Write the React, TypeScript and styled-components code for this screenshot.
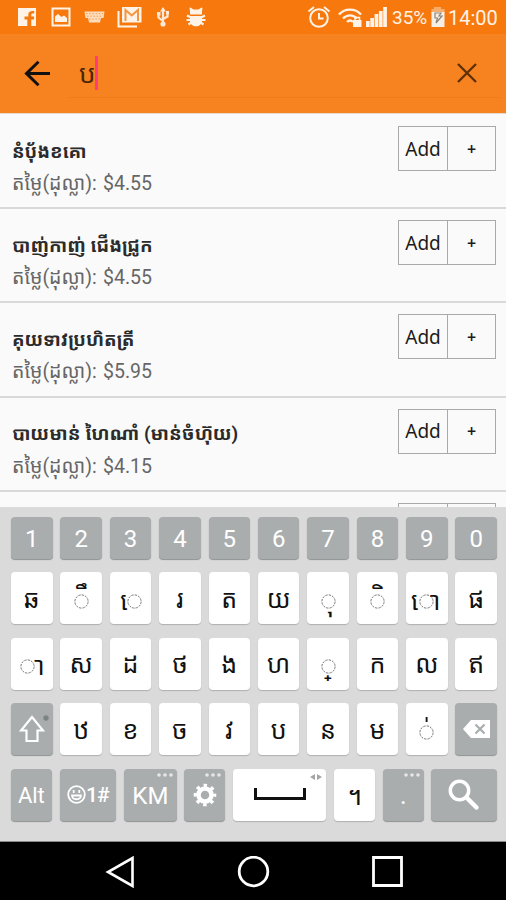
import React from "react";
import styled, { createGlobalStyle } from "styled-components";

const GlobalStyle = createGlobalStyle`
  *, *::before, *::after { box-sizing: border-box; }
  html, body { margin: 0; padding: 0; }
  body {
    background: #000;
    font-family: Roboto, "Noto Sans Khmer", "Khmer OS", "Noto Sans", sans-serif;
    overflow: hidden;
  }
  svg { display: block; flex: none; }
`;

const Screen = styled.div`
  width: 506px;
  height: 900px;
  display: flex;
  flex-direction: column;
  overflow: hidden;
  background: #fafafa;
`;

const StatusBar = styled.header`
  height: 34px;
  flex: none;
  display: flex;
  align-items: center;
  justify-content: space-between;
  padding: 0 9px 0 17px;
  background: #f7790d;
  color: #fff3e8;
`;

const StatusGroup = styled.div`
  display: flex;
  align-items: center;
`;

const StatusIcon = styled.span<{ $gap?: number }>`
  display: block;
  margin-left: ${(p) => p.$gap ?? 0}px;
`;

const StatusText = styled.span<{ $size: number; $gap: number; $width: number }>`
  font-size: ${(p) => p.$size}px;
  width: ${(p) => p.$width}px;
  margin-left: ${(p) => p.$gap}px;
  line-height: 34px;
  padding-top: 2px;
  white-space: nowrap;
`;

const AppBar = styled.div`
  height: 79px;
  flex: none;
  display: flex;
  align-items: flex-start;
  padding-left: 24px;
  background: #f78320;
`;

const BackButton = styled.button`
  border: 0;
  padding: 0;
  margin: 26px 0 0;
  width: 27px;
  background: none;
`;

const SearchField = styled.div`
  margin-left: 17px;
  width: 432px;
  height: 64px;
  display: flex;
  align-items: flex-start;
  border-bottom: 1px solid #ee7d1d;
  padding-left: 11px;
`;

const Query = styled.span`
  font-size: 26px;
  line-height: 30px;
  margin-top: 25px;
  color: #4a2606;
  width: 16px;
  white-space: nowrap;
`;

const Caret = styled.span`
  width: 2.500px;
  height: 34px;
  margin-top: 22px;
  background: #ff3d7d;
`;

const ClearButton = styled.button`
  border: 0;
  padding: 0;
  background: none;
  margin: 29px 0 0 359.500px;
`;

const List = styled.main`
  height: 394px;
  flex: none;
  overflow: hidden;
  border-top: 1px solid #e6d9cd;
  padding-top: 1px;
`;

const Item = styled.section`
  height: 94.200px;
  border-bottom: 2px solid #d9d9d9;
  display: flex;
  justify-content: space-between;
  padding: 0 10px 0 12px;
`;

const ItemText = styled.div`
  padding-top: 22.500px;
`;

const Title = styled.h2<{ $scale: number }>`
  margin: 0;
  font-size: 18px;
  font-weight: 700;
  line-height: 28px;
  color: #2b2b2b;
  white-space: nowrap;
  transform: scaleX(${(p) => p.$scale});
  transform-origin: left;
`;

const Price = styled.p`
  margin: 5.600px 0 0;
  display: flex;
  font-size: 19.500px;
  line-height: 26px;
  color: #666;
  white-space: nowrap;
`;

const PriceLabel = styled.span`
  width: 91px;
`;

const ButtonPair = styled.div`
  margin-top: 11px;
  width: 98px;
  height: 45px;
  display: grid;
  grid-template-columns: 48px 1fr;
  border: 1px solid #a9a9a9;
`;

const PairButton = styled.button`
  border: 0;
  padding: 0;
  background: none;
  font-family: "Noto Sans", sans-serif;
  font-size: 19px;
  color: #1b1b1b;
  & + & {
    border-left: 1px solid #a9a9a9;
    font-size: 16px;
    font-weight: 600;
  }
`;

const Keyboard = styled.section`
  height: 335px;
  flex: none;
  background: #dadada;
  border-bottom: 1px solid #8a8a8a;
  padding: 10px 9px 0 11px;
`;

const KeyRow = styled.div<{ $height: number; $gap: number; $columns?: string }>`
  display: grid;
  grid-template-columns: ${(p) => p.$columns ?? "repeat(10, 1fr)"};
  column-gap: 7.800px;
  height: ${(p) => p.$height}px;
  margin-bottom: ${(p) => p.$gap}px;
`;

const Key = styled.button<{ $dark?: boolean; $size?: number; $drop?: number }>`
  position: relative;
  min-width: 0;
  border: 0;
  border-radius: 4px;
  display: flex;
  align-items: center;
  justify-content: center;
  padding: ${(p) => p.$drop ?? 0}px 0 0;
  font-family: inherit;
  font-size: ${(p) => p.$size ?? 25}px;
  line-height: 30px;
  white-space: nowrap;
  background: ${(p) => (p.$dark ? "#a9adae" : "#fff")};
  color: ${(p) => (p.$dark ? "#fff" : "#111")};
  box-shadow: 0 1px 1px ${(p) => (p.$dark ? "#8e9293" : "#b0b0b0")};
`;

const Vowel = styled.span<{ $x: number; $y: number; $spread: number }>`
  font-family: "Noto Sans Khmer", "Khmer OS", sans-serif;
  word-spacing: ${(p) => p.$spread}px;
  transform: translate(${(p) => p.$x}px, ${(p) => p.$y}px);
`;

const BaseRing = styled.span<{ $x: number }>`
  position: absolute;
  left: calc(50% - 7.500px + ${(p) => p.$x}px);
  top: 21.500px;
`;

const SymbolLabel = styled.span`
  font-size: 21px;
  font-weight: 500;
  letter-spacing: -1px;
`;

const CornerMark = styled.span<{ $top: number; $right: number }>`
  position: absolute;
  top: ${(p) => p.$top}px;
  right: ${(p) => p.$right}px;
`;

const NavBar = styled.nav`
  height: 58px;
  flex: none;
  display: flex;
  background: #000;
  padding: 14px 0 0 105px;
`;

const NavButton = styled.button<{ $gap?: number }>`
  border: 0;
  padding: 0;
  background: none;
  height: 32px;
  margin-left: ${(p) => p.$gap ?? 0}px;
`;

const items = [
  { title: "នំប៉័ងខគោ", price: "$4.55", scale: 1.035 },
  { title: "បាញ់កាញ់ ជើងជ្រូក", price: "$4.55", scale: 1.037 },
  { title: "គុយទាវប្រហិតត្រី", price: "$5.95", scale: 1.035 },
  { title: "បាយមាន់ ហៃណាំ (មាន់ចំហ៊ុយ)", price: "$4.15", scale: 1.048 },
  { title: "", price: "", scale: 1 },
];

interface KeySpec {
  text: string;
  /* Dependent vowels sit around a dashed placeholder ring. */
  ring?: number;
  x?: number;
  y?: number;
  spread?: number;
}

const NB = "\u00a0";
const digits = ["1", "2", "3", "4", "5", "6", "7", "8", "9", "0"];
const upperKeys: KeySpec[] = [
  { text: "ឆ" },
  { text: NB + "ឹ", ring: 0, x: 4, y: -3 },
  { text: NB + "េ", ring: 4, x: -3.5 },
  { text: "រ" },
  { text: "ត" },
  { text: "យ" },
  { text: NB + "ុ", ring: 0, x: 6, y: 1 },
  { text: NB + "ិ", ring: 0, x: 4, y: -3 },
  { text: NB + "េ" + NB + "ា", ring: 0, spread: 2 },
  { text: "ផ" },
];
const homeKeys: KeySpec[] = [
  { text: NB + "ា", ring: -4, x: 6 },
  { text: "ស" },
  { text: "ដ" },
  { text: "ថ" },
  { text: "ង" },
  { text: "ហ" },
  { text: NB + "្", ring: 0, x: 4 },
  { text: "ក" },
  { text: "ល" },
  { text: "ឥ" },
];
const lowerKeys: KeySpec[] = [
  { text: "ឋ" },
  { text: "ខ" },
  { text: "ច" },
  { text: "វ" },
  { text: "ប" },
  { text: "ន" },
  { text: "ម" },
  { text: NB + "់", ring: 0, x: 4, y: -1.5 },
];

const LetterKey = ({ spec }: { spec: KeySpec }) => (
  <Key $drop={3}>
    {spec.ring === undefined ? (
      spec.text
    ) : (
      <>
        <BaseRing $x={spec.ring}>
          <svg width="15" height="15" fill="none" stroke="#777" strokeWidth="1">
            <circle cx="7.500" cy="7.500" r="6.600" strokeDasharray="2.400 1.056" />
          </svg>
        </BaseRing>
        <Vowel $x={spec.x ?? 0} $y={spec.y ?? 0} $spread={spec.spread ?? 0}>
          {spec.text}
        </Vowel>
      </>
    )}
  </Key>
);

const Dots = () => (
  <svg width="16" height="4" fill="#e6e8e8">
    <circle cx="2" cy="2" r="1.800" />
    <circle cx="8" cy="2" r="1.800" />
    <circle cx="14" cy="2" r="1.800" />
  </svg>
);

export default function App() {
  return (
    <>
      <GlobalStyle />
      <Screen>
        <StatusBar>
          <StatusGroup>
            <StatusIcon>
              <svg width="20" height="20" viewBox="0 0 20 20">
                <path fill="#fff3e8" d="M1 1h18v18h-4.700v-6.600h2.500l.4-2.900h-2.900V7.800c0-.9.3-1.300 1.400-1.300h1.500V4c-3.900-.5-5.900.7-5.900 3.400v2.100H7.500v2.900h2.800V19H1z" />
              </svg>
            </StatusIcon>
            <StatusIcon $gap={14}>
              <svg width="20" height="20" viewBox="0 0 20 20">
                <path fill="none" stroke="#fff3e8" strokeWidth="2" d="M1.500 1.500h17v17h-17z" />
                <path fill="#fff3e8" d="M4 15V9.500L7 7l3.500 3L13 8.500l3 2.500v4z" />
              </svg>
            </StatusIcon>
            <StatusIcon $gap={13}>
              <svg width="21" height="12" viewBox="0 0 21 12">
                <path fill="#ffdcbd" d="M.5.500h20L19.500 7H17l-1 4.500H5L4 7H1.500z" />
                <path stroke="#f59a4a" strokeWidth="1" strokeDasharray="1.500 1.700" d="M2 2.600h17M3 5.200h15M5 8h11" />
              </svg>
            </StatusIcon>
            <StatusIcon $gap={12}>
              <svg width="25" height="22" viewBox="0 0 25 22">
                <path fill="none" stroke="#fff3e8" strokeWidth="2" d="M1.500 5v15.500H20" />
                <path fill="#fff3e8" d="M5 1h19.500v15.500H5z" />
                <path fill="none" stroke="#f4953f" strokeWidth="2" d="M8.500 15V4l6.200 5.500L21 4v11" />
              </svg>
            </StatusIcon>
            <StatusIcon $gap={14}>
              <svg width="14" height="20" viewBox="0 0 14 20" fill="none" stroke="#ffe9d6" strokeWidth="2.200">
                <path d="M7 3v14M2.500 7v3.500L7 14M11.500 6v3.500L7 12" />
                <path fill="#ffe9d6" stroke="none" d="M7 0l3 4.500H4zM1 5h3.500v3.500H1zM10 4h3v3.500h-3z" />
                <circle cx="7" cy="17" r="1.500" fill="#ffe9d6" />
              </svg>
            </StatusIcon>
            <StatusIcon $gap={16}>
              <svg width="20" height="20" viewBox="0 0 20 20">
                <path fill="#fff3e8" d="M4 7.500V4.500L3.500 1l1-.5L7.500 2.500h5l3-2 1 .5-.5 3.500v3zM4 9h12v4.800c0 3.500-2.800 5.500-6 5.500s-6-2-6-5.500z" />
                <path stroke="#fff3e8" strokeWidth="2.200" d="M1 8.500L5 10.500M19 8.500L15 10.500M.5 13h19M2.500 17.500l3.500-2.300M17.500 17.500L14 15.200" />
              </svg>
            </StatusIcon>
          </StatusGroup>
          <StatusGroup>
            <StatusIcon>
              <svg width="24" height="24" viewBox="0 0 24 24" fill="none" stroke="#fff3e8" strokeWidth="2">
                <circle cx="12" cy="13" r="8.800" />
                <path d="M12 8v5.500h4.500M1.500 6.500L7 2M22.500 6.500L17 2" />
              </svg>
            </StatusIcon>
            <StatusIcon $gap={7}>
              <svg width="24" height="22" viewBox="0 0 24 22" fill="none" stroke="#fff3e8" strokeWidth="2.400">
                <path d="M1 8.500C7 2 17 2 23 8.500M5 12.500c4-4.200 10-4.200 14 0M9 16c2-2 4-2 6 0" />
                <path fill="#fff3e8" stroke="none" d="M15 14h8.500v7H15z" />
                <path strokeWidth="1.500" d="M17 14v-2.500h4.500V14" />
              </svg>
            </StatusIcon>
            <StatusIcon $gap={4}>
              <svg width="21" height="20" viewBox="0 0 21 20" fill="#fff3e8">
                <path d="M0 14h3.700v6H0zM4.300 11H8v9H4.300zM8.600 7h3.700v13H8.600zM12.900 4h3.700v16h-3.700zM17.200 0h3.700v20h-3.700z" />
              </svg>
            </StatusIcon>
            <StatusText $size={19} $gap={5} $width={34}>35%</StatusText>
            <StatusIcon $gap={5}>
              <svg width="14" height="20" viewBox="0 0 14 20">
                <path fill="#f6ad6c" d="M3 0h7v2h3.500v4H.5V2H3z" />
                <path fill="#f4f0e8" d="M.5 5h13v15H.5z" />
                <path fill="none" stroke="#8f8577" strokeWidth="1.200" d="M4 6h6l-2 3h3l-6 7 1.500-5H4z" />
              </svg>
            </StatusIcon>
            <StatusText $size={20} $gap={3} $width={49}>14:00</StatusText>
          </StatusGroup>
        </StatusBar>

        <AppBar>
          <BackButton aria-label="Back">
            <svg width="27" height="27" viewBox="0 0 27 27" fill="none" stroke="#111" strokeWidth="3">
              <path d="M26 13.500H3M14.500 1.800L2.500 13.500l12 11.700" />
            </svg>
          </BackButton>
          <SearchField>
            <Query>ប</Query>
            <Caret />
            <ClearButton aria-label="Clear">
              <svg width="20" height="20" viewBox="0 0 20 20" stroke="#5d3108" strokeWidth="2.300">
                <path d="M1 1l18 18M19 1L1 19" />
              </svg>
            </ClearButton>
          </SearchField>
        </AppBar>

        <List>
          {items.map((item, i) => (
            <Item key={i}>
              <ItemText>
                <Title $scale={item.scale}>{item.title}</Title>
                {item.price && (
                  <Price>
                    <PriceLabel>តម្លៃ(ដុល្លា):</PriceLabel>
                    {item.price}
                  </Price>
                )}
              </ItemText>
              <ButtonPair>
                <PairButton>{item.price && "Add"}</PairButton>
                <PairButton>{item.price && "+"}</PairButton>
              </ButtonPair>
            </Item>
          ))}
        </List>

        <Keyboard>
          <KeyRow $height={42} $gap={13}>
            {digits.map((d) => (
              <Key key={d} $dark $size={24} $drop={2}>{d}</Key>
            ))}
          </KeyRow>
          <KeyRow $height={52} $gap={13.600}>
            {upperKeys.map((k) => (
              <LetterKey key={k.text} spec={k} />
            ))}
          </KeyRow>
          <KeyRow $height={52} $gap={13.600}>
            {homeKeys.map((k) => (
              <LetterKey key={k.text} spec={k} />
            ))}
          </KeyRow>
          <KeyRow $height={52} $gap={13.600}>
            <Key $dark aria-label="Shift">
              <svg width="26" height="28" viewBox="0 0 26 28" fill="none" stroke="#fff" strokeWidth="2.200">
                <path d="M13 2L2 15.500h5.500V26h11V15.500H24z" />
              </svg>
              <CornerMark $top={12} $right={4}>
                <svg width="6" height="6"><circle cx="3" cy="3" r="2.700" fill="#7d8485" /></svg>
              </CornerMark>
            </Key>
            {lowerKeys.map((k) => (
              <LetterKey key={k.text} spec={k} />
            ))}
            <Key $dark aria-label="Delete">
              <svg width="27" height="18" viewBox="0 0 27 18">
                <path fill="#fff" d="M0 9l8-9h19v18H8z" />
                <path stroke="#a9adae" strokeWidth="2.200" d="M12.500 4.500l9 9M21.500 4.500l-9 9" />
              </svg>
            </Key>
          </KeyRow>
          <KeyRow $height={52} $gap={0} $columns="41fr 57fr 53fr 41fr 94fr 41fr 41fr 66fr">
            <Key $dark $size={22} $drop={3}>Alt</Key>
            <Key $dark>
              <svg width="19" height="19" viewBox="0 0 19 19" fill="none" stroke="#fff" strokeWidth="1.800">
                <circle cx="9.500" cy="9.500" r="8.300" />
                <path d="M5 10.500c.5 5 8.500 5 9 0zM6.700 5v3M12.300 5v3" />
              </svg>
              <SymbolLabel>1#</SymbolLabel>
            </Key>
            <Key $dark $size={24} $drop={3}>
              KM
              <CornerMark $top={4} $right={4}><Dots /></CornerMark>
            </Key>
            <Key $dark aria-label="Settings">
              <svg width="24" height="24" viewBox="-12 -12 24 24" fill="none" stroke="#fff">
                <circle r="6.500" strokeWidth="4.500" />
                <circle r="9.500" strokeWidth="3.600" strokeDasharray="3.400 4.060" strokeDashoffset="1.700" />
              </svg>
              <CornerMark $top={4} $right={4}><Dots /></CornerMark>
            </Key>
            <Key aria-label="Space">
              <svg width="52" height="13" viewBox="0 0 52 13" fill="none" stroke="#111" strokeWidth="3">
                <path d="M1.500 0v10.500h49V0" />
              </svg>
              <CornerMark $top={5} $right={4}>
                <svg width="12" height="6" fill="#a5a5a5"><path d="M0 3l5-3v6zM12 3L7 0v6z" /></svg>
              </CornerMark>
            </Key>
            <Key $drop={4}>។</Key>
            <Key $dark $drop={3}>
              .
              <CornerMark $top={4} $right={4}><Dots /></CornerMark>
            </Key>
            <Key $dark aria-label="Search">
              <svg width="32" height="32" viewBox="0 0 32 32" fill="none" stroke="#fff">
                <circle cx="11.500" cy="11.500" r="9.200" strokeWidth="3.500" />
                <path strokeWidth="4.500" strokeLinecap="round" d="M19 19l9.500 9.500" />
              </svg>
            </Key>
          </KeyRow>
        </Keyboard>

        <NavBar>
          <NavButton aria-label="Back">
            <svg width="30" height="32" viewBox="0 0 30 32" fill="none" stroke="#fff" strokeWidth="2.600">
              <path d="M27.500 2v28L3 16z" />
            </svg>
          </NavButton>
          <NavButton aria-label="Home" $gap={102}>
            <svg width="33" height="32" viewBox="0 0 33 32" fill="none" stroke="#fff" strokeWidth="2.800">
              <circle cx="16.500" cy="15.500" r="14.300" />
            </svg>
          </NavButton>
          <NavButton aria-label="Recent apps" $gap={101}>
            <svg width="32" height="32" viewBox="0 0 32 32" fill="none" stroke="#fff" strokeWidth="2.800">
              <path d="M2.500 1.500h28v28h-28z" />
            </svg>
          </NavButton>
        </NavBar>
      </Screen>
    </>
  );
}
